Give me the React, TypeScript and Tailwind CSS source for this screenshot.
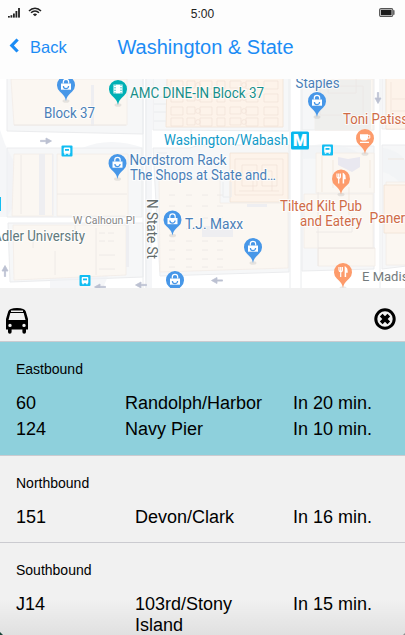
import type { ReactNode } from "react";

type Departure = { route: string; stop: ReactNode; wait: string };

const BLUE = "#4a7fb8";
const ORANGE = "#cf6b47";

function StatusBar() {
  return (
    <div className="grid h-7 grid-cols-3 items-center px-2">
      <div className="flex items-center gap-2">
        <svg className="-mt-1" width="12" height="11" viewBox="0 0 12 11" fill="#222">
          <rect x="0" y="9" width="1.8" height="1.6" />
          <rect x="2.5" y="8.2" width="1.8" height="2.4" />
          <rect x="5" y="6.5" width="1.8" height="4.1" />
          <rect x="7.5" y="4" width="1.8" height="6.6" />
          <rect x="10.1" y="1" width="1.8" height="9.6" />
        </svg>
        <svg className="-mt-1" width="14" height="10" viewBox="0 0 14 10" fill="none" stroke="#222" strokeWidth="1.5">
          <path d="M1 3.9C4.4.2 9.6.2 13 3.9" />
          <path d="M3 5.8c2.3-2.4 5.7-2.4 8 0" />
          <path d="M4.9 7.5c1.3-1.2 2.9-1.2 4.2 0L7 9.3z" fill="#222" stroke="none" />
        </svg>
      </div>
      <div className="text-center text-xs text-[#222]">5:00</div>
      <svg className="-mt-1 mr-0.5 justify-self-end" width="16" height="9" viewBox="0 0 16 9">
        <rect x=".6" y=".6" width="13.2" height="7.8" rx="1.4" fill="#fff" stroke="#555" strokeWidth="1.1" />
        <rect x="1.8" y="1.8" width="10.8" height="5.4" fill="#1c1c1c" />
        <path d="M14.4 2.5h.8v4h-.8z" fill="#555" stroke="#555" strokeWidth=".6" />
      </svg>
    </div>
  );
}

type LabelProps = { x: number; y: number; w: number; size?: number; fill: string; children: string };

function Label({ x, y, w, size = 14, fill, children }: LabelProps) {
  return (
    <text x={x} y={y} textLength={w} lengthAdjust="spacingAndGlyphs" fontSize={size} fill={fill} stroke="#fff" strokeWidth="2" strokeOpacity=".75" paintOrder="stroke">
      {children}
    </text>
  );
}

function Pin({ x, y, kind = "bag" }: { x: number; y: number; kind?: "bag" | "film" | "cup" | "fork" }) {
  const color = kind === "bag" ? "#4797e8" : kind === "film" ? "#00b0b5" : "#fd9b6b";
  return (
    <g transform={`translate(${x} ${y})`}>
      <ellipse cx="0" cy="16" rx="3.5" ry="1.8" fill="#777" opacity=".16" />
      <path d="M0 16C-.8 11.5-3 9.6-6 6.8A9 9 0 1 1 6 6.8C3 9.6.8 11.5 0 16z" fill={color} />
      {kind === "bag" && (
        <g>
          <path d="M-5-1.5H5V4.7H-5z" fill="#fff" />
          <path d="M-2.7-1.5V-3a2.7 2.7 0 0 1 5.4 0v1.5" fill="none" stroke="#fff" strokeWidth="1.2" />
          <path d="M-2.6 1a2.6 2.6 0 0 0 5.2 0" fill="none" stroke={color} strokeWidth="1.2" />
        </g>
      )}
      {kind === "film" && (
        <g>
          <path d="M-4.5-4.5h9v9h-9z" fill="#fff" />
          <path d="M-3-4.5v9M3-4.5v9" stroke={color} strokeWidth="1" strokeDasharray="1.3 1.3" />
        </g>
      )}
      {kind === "cup" && (
        <g>
          <path d="M-5-3.7h8v3.8Q3 2.5.5 2.5h-3Q-5 2.5-5 .1zM-5 3.8H4V5h-9z" fill="#fff" />
          <path d="M3-2.7h1.8v2.8H3" fill="none" stroke="#fff" />
        </g>
      )}
      {kind === "fork" && (
        <g fill="none" stroke="#fff">
          <path d="M-4-5v3q0 1.6 1.7 1.6T-.6-2v-3M-2.3-5v10" strokeWidth="1.2" />
          <path d="M2.4 5V-4.5Q4.2-3.4 4 0H2.6" strokeWidth="1.5" fill="#fff" />
        </g>
      )}
    </g>
  );
}

function BusStop({ x, y }: { x: number; y: number }) {
  return (
    <g transform={`translate(${x} ${y})`}>
      <rect width="11" height="11" rx="1" fill="#12bdf2" />
      <rect x="2.2" y="2" width="6.6" height="6.2" rx="1" fill="#fff" />
      <path d="M3.5 3.5h4v1.8h-4z" fill="#12bdf2" />
      <path d="M2.8 8h1.5v1.2H2.8zM6.7 8h1.5v1.2H6.7z" fill="#fff" />
    </g>
  );
}

function Arrow({ x, y, turn = 0 }: { x: number; y: number; turn?: number }) {
  return (
    <path transform={`translate(${x} ${y}) rotate(${turn})`} d="M-5.5-.6H0V-3L5.5 0 0 3V.6h-5.5z" fill="#bcc1d2" stroke="#bcc1d2" strokeWidth=".8" />
  );
}

function StreetMap() {
  return (
    <svg className="block h-[209px] w-full shrink-0" viewBox="0 79 405 209" fontFamily="Roboto, sans-serif">
      <path fill="#fff" d="M0 79h405v209H0z" />
      <g fill="#f6f7f8" stroke="#ebecee">
        <path d="M7 78H143V134L7 131zM7 148H142V217H7zM8 223H143V277L10 282zM153 78H289V131L153 130z" />
        <path d="M153 148 190 148 199 145H289V272L160 276z" />
        <path d="M302 78H374V130H302zM302 146H374V269L302 271zM382 78h25v51h-25zM382 145h25v121l-25 3z" />
      </g>
      <g fill="#f0f2f5" opacity=".65">
        <path d="M0 130Q8 158 28 180L7 217H0zM82 148Q110 136 144 148zM50 288V276l60-5-7 17z" />
        <path d="M145 79h7v209h-7z" />
        <path d="M303 148Q343 135 374 165v22q-35-32-72-28zM383 148Q398 150 405 160v30q-9-15-22-18z" />
      </g>

      <g fill="#fbf7f2" stroke="#f2ece7" strokeWidth=".8">
        <path d="M11 79H127V125H14zM14 154H53V216H12zM57 154H128V216H57zM13 225H126V275L14 280z" />
        <path d="M159 179H220V203H288V268L160 272zM304 194H373V248H304zM318 248H375V266H318z" />
        <path d="M315 79H373V130H315zM316 153H374V193H316zM386 182H406V265H386zM386 79H406V129H386z" />
      </g>
      <g fill="#eeeef1">
        <path d="M91 85h3v41h-3zM39 154h6v61h-6zM52 154h1v61h-1zM126 225h3v42h-3zM202 226h31v11h-31zM247 204h20v3h-20z" />
        <path d="M315 80h56v50h-56z" fill="#efefed" />
        <path d="M338 157l10 2 12-2v10l-8 5-14-7z" fill="#e9e8f0" />
      </g>
      <g fill="#fdf3ea" stroke="#f0e2d6" strokeWidth=".8">
        <path d="M167 78H283V127H166zM230 153H288V202H230zM386 78h20v51h-20zM384 185h24v48h-24z" />
      </g>

      <g fill="none" stroke="#efe0d5" strokeWidth=".7" opacity=".85">
        {[81, 94, 107, 118].map((y) => (
          <g key={y}>
            <path d={`M171 ${y}h12v8h-12zM187 ${y}h8v7h-8zM200 ${y}h12v8h-12zM217 ${y}h8v8h-8zM230 ${y}h11v7h-11zM246 ${y}h12v8h-12zM264 ${y}h14v8h-14z`} />
            <circle cx="198" cy={y + 4} r="2.4" />
            <circle cx="244" cy={y + 4} r="2.4" />
          </g>
        ))}
        <path d="M235 159h48v36h-48zM242 165h15v21h-15zM262 165h15v21h-15zM239 191h40M247 171h6v20M268 171h4v20" />
        <path d="M391 82v42h14M392 99h13M392 111h13M388 159h16M322 155v37M333 160v28M370 160v28M349 187v28" />
      </g>
      <g fill="none" stroke="#ece7e5" strokeWidth=".8">
        <path d="M14 125h112M21 155v59M57 194h70M99 255h16M99 269h16M99 233h6m3 0h6M99 241h6m3 0h6M96 228v47" />
        <path d="M33 230v18M75 225v12M55 251v24" />
        {[195, 206, 218, 229, 241, 250, 259, 267].map((y) => (
          <path key={y} d={`M169 ${y}h6M186 ${y}h6M202 ${y}h6M217 ${y}h6`} />
        ))}
        <path d="M320 86h43v29h-43zM328 79v14h28V79M318 248h57M318 192v74M316 232h36v-16" />
      </g>
      <g stroke="#eaecee" fill="none">
        <path d="M154 97h12M154 104h12M154 112h12M154 121h12M157 153h10M191 129v16M223 182v15h8v-15M143 79v209M146 79v209M290 79v209M301 79v209M380 79v209" />
      </g>

      <Arrow x={46} y={141} />
      <Arrow x={378} y={98} turn={90} />
      <Arrow x={5} y={271} turn={-90} />
      <Arrow x={141} y={285} turn={180} />
      <Arrow x={217} y={280.5} turn={180} />
      <Arrow x={100} y={287} turn={180} />

      <BusStop x={61.5} y={145.5} />
      <BusStop x={322} y={144.5} />
      <BusStop x={79.5} y={275} />
      <path d="M0 197h1v14H0z" fill="#12bdf2" />

      <Pin x={66} y={85} />
      <Pin x={118} y={89} kind="film" />
      <Pin x={117.5} y={163} />
      <Pin x={317} y={101} />
      <Pin x={172.5} y={219.5} />
      <Pin x={253} y={247} />
      <Pin x={175} y={280} />
      <Pin x={365} y={138} kind="cup" />
      <Pin x={341} y={178.5} kind="fork" />
      <Pin x={343} y={272} kind="fork" />

      <Label x={44} y={117.5} w={51} size={14} fill={BLUE}>Block 37</Label>
      <Label x={130} y={98} w={134} size={14} fill="#188f8a">AMC DINE-IN Block 37</Label>
      <Label x={164} y={145} w={124} size={14} fill="#119ac8">Washington/Wabash</Label>
      <Label x={129.5} y={165} w={97} size={14} fill={BLUE}>Nordstrom Rack</Label>
      <Label x={130} y={180} w={146} size={14} fill={BLUE}>The Shops at State and…</Label>
      <Label x={295.5} y={88} w={44} size={14} fill={BLUE}>Staples</Label>
      <Label x={343} y={124} w={72} size={14} fill={ORANGE}>Toni Patisse</Label>
      <Label x={185} y={229} w={58} size={14} fill={BLUE}>T.J. Maxx</Label>
      <Label x={280} y={211} w={82} size={14} fill={ORANGE}>Tilted Kilt Pub</Label>
      <Label x={300} y={226} w={62} size={14} fill={ORANGE}>and Eatery</Label>
      <Label x={369.5} y={223} w={43} size={14} fill={ORANGE}>Panera</Label>
      <Label x={73} y={223.5} w={62} size={11} fill="#858585">W Calhoun Pl</Label>
      <Label x={-7} y={240.5} w={92} size={14} fill="#60797d">Adler University</Label>
      <Label x={362} y={281} w={61} size={13.5} fill="#737b7d">E Madison</Label>
      <g transform="translate(147 199) rotate(90)">
        <Label x={0} y={0} w={60} size={14} fill="#626b6b">N State St</Label>
      </g>

      <rect x="291" y="131.5" width="18" height="18" rx="1.5" fill="#08b7ee" />
      <text x="300" y="146" textAnchor="middle" fontSize="16" fontWeight="900" fill="#fff" stroke="#fff" strokeWidth=".2">M</text>
    </svg>
  );
}

function DirectionBlock({ name, departures, active = false }: { name: string; departures: Departure[]; active?: boolean }) {
  return (
    <section className={`border-b border-[#cbcbd0] px-4 pt-[17px] ${active ? "bg-[#8ed0dc] pb-[13px]" : "pb-[14px]"}`}>
      <h2 className="text-sm leading-5 font-normal">{name}</h2>
      <div className={`text-lg ${active ? "pt-[11px] leading-[26px]" : "pt-[14px] leading-[21px]"}`}>
        {departures.map((d) => (
          <div key={d.route} className={`grid ${active ? "grid-cols-[109px_168px_1fr]" : "grid-cols-[119px_158px_1fr]"}`}>
            <span>{d.route}</span>
            <span>{d.stop}</span>
            <span>{d.wait}</span>
          </div>
        ))}
      </div>
    </section>
  );
}

export default function App() {
  return (
    <main className="relative flex h-[635px] w-[405px] flex-col overflow-hidden bg-[#f1f1f1] font-['Liberation_Sans',Arial,sans-serif] text-black">
      <header className="h-[79px] shrink-0 bg-[#fdfdfd]">
        <StatusBar />
        <div className="grid grid-cols-[109px_193px_1fr] items-center text-[#1b8cf5]">
          <button className="flex items-center gap-[11px] pl-[9px] text-[16.5px]">
            <svg className="-mt-1" width="10" height="15" viewBox="0 0 10 15" fill="none" stroke="currentColor" strokeWidth="3.2">
              <path d="M8.6 1.5 2.8 7.5l5.8 6" />
            </svg>
            Back
          </button>
          <h1 className="text-center text-xl leading-[38px]">Washington &amp; State</h1>
        </div>
      </header>

      <StreetMap />

      <div className="flex h-[54px] shrink-0 items-center justify-between border-b border-[#cbcbd0] pt-2 pr-[9px] pl-[6px]">
        <svg className="mt-1" width="22" height="26" viewBox="0 0 22 26">
          <path fillRule="evenodd" d="M0 21.5V11L2.2 3.5Q3.2 0 11 0t8.8 3.5L22 11v10.5h-2V24a1.8 1.8 0 0 1-3.6 0v-2.5H5.6V24A1.8 1.8 0 0 1 2 24v-2.5zM5 2.5v1.4h12V2.5zM4.3 5 2.5 12h17L17.7 5zM4 15.7a1.7 1.7 0 1 0 0 3.4 1.7 1.7 0 0 0 0-3.4zm14 0a1.7 1.7 0 1 0 0 3.4 1.7 1.7 0 0 0 0-3.4z" />
        </svg>
        <svg width="22" height="22" viewBox="0 0 22 22" fill="none" stroke="#000">
          <circle cx="11" cy="11" r="9.2" strokeWidth="3" />
          <path d="m7.2 7.2 7.6 7.6m0-7.6-7.6 7.6" strokeWidth="3.8" />
        </svg>
      </div>

      <DirectionBlock
        active
        name="Eastbound"
        departures={[
          { route: "60", stop: "Randolph/Harbor", wait: "In 20 min." },
          { route: "124", stop: "Navy Pier", wait: "In 10 min." },
        ]}
      />
      <DirectionBlock name="Northbound" departures={[{ route: "151", stop: "Devon/Clark", wait: "In 16 min." }]} />
      <DirectionBlock name="Southbound" departures={[{ route: "J14", stop: <>103rd/Stony<br />Island</>, wait: "In 15 min." }]} />

      <div className="pointer-events-none absolute inset-x-0 bottom-0 h-9 bg-gradient-to-b from-transparent to-black/7" />
      <div className="absolute bottom-0 left-0 h-[3px] w-[3px] bg-[#174438] [clip-path:polygon(0_0,100%_100%,0_100%)]" />
      <div className="absolute right-0 bottom-0 h-[2px] w-[2px] bg-[#8b8b8b] [clip-path:polygon(100%_0,100%_100%,0_100%)]" />
    </main>
  );
}
